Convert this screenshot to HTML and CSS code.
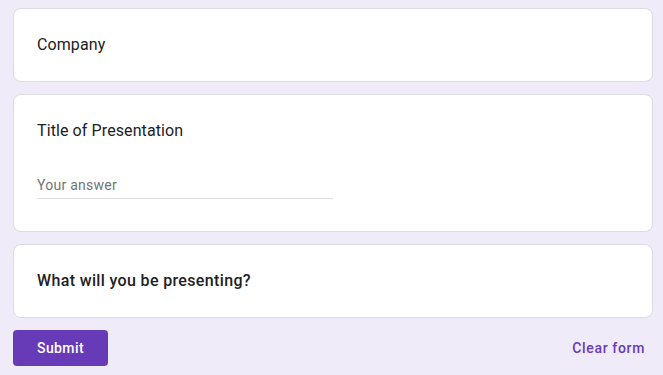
FILE: index.html
```html
<!DOCTYPE html>
<html lang="en">
<head>
<meta charset="utf-8">
<title>Form</title>
<link rel="stylesheet" href="styles.css">
</head>
<body>
<main class="form">
  <section class="card">
    <div class="q-title">Company</div>
  </section>
  <section class="card">
    <div class="q-title">Title of Presentation</div>
    <div class="answer">
      <span class="answer-text">Your answer</span>
    </div>
  </section>
  <section class="card">
    <div class="q-title strong">What will you be presenting?</div>
  </section>
  <div class="actions">
    <button class="submit" type="button">Submit</button>
    <button class="clear" type="button">Clear form</button>
  </div>
</main>
</body>
</html>
```

FILE: styles.css
```css
html, body {
  margin: 0;
  padding: 0;
  background: #f0ebf8;
}
body {
  padding: 8px 10px 0 13px;
  font-family: Roboto, "Noto Sans", sans-serif;
  color: #202124;
}
.form {
  width: 640px;
  display: flex;
  flex-direction: column;
  gap: 12px;
}
.card {
  background: #fff;
  border: 1px solid #dadce0;
  border-radius: 8px;
  padding: 24px 24px 24px 23px;
}
.q-title {
  font-size: 16px;
  line-height: 24px;
  letter-spacing: 0.1px;
  font-weight: 400;
}
.strong {
  font-weight: 500;
  letter-spacing: 0.35px;
}
.answer {
  width: 296px;
  margin-top: 32px;
  margin-bottom: 8px;
  padding-bottom: 3px;
  border-bottom: 1px solid #dadce0;
}
.answer-text {
  display: block;
  font-size: 14px;
  line-height: 20px;
  color: #70757a;
  letter-spacing: 0.25px;
}
.actions {
  display: flex;
  justify-content: space-between;
  align-items: center;
}
.submit {
  background: #673ab7;
  color: #fff;
  border: none;
  border-radius: 4px;
  height: 36px;
  width: 95px;
  font-family: inherit;
  font-size: 14px;
  font-weight: 500;
  letter-spacing: 0.4px;
}
.clear {
  background: none;
  border: none;
  color: #673ab7;
  font-family: inherit;
  font-size: 14px;
  font-weight: 500;
  letter-spacing: 0.65px;
  padding: 0 8px;
  height: 36px;
}
```
